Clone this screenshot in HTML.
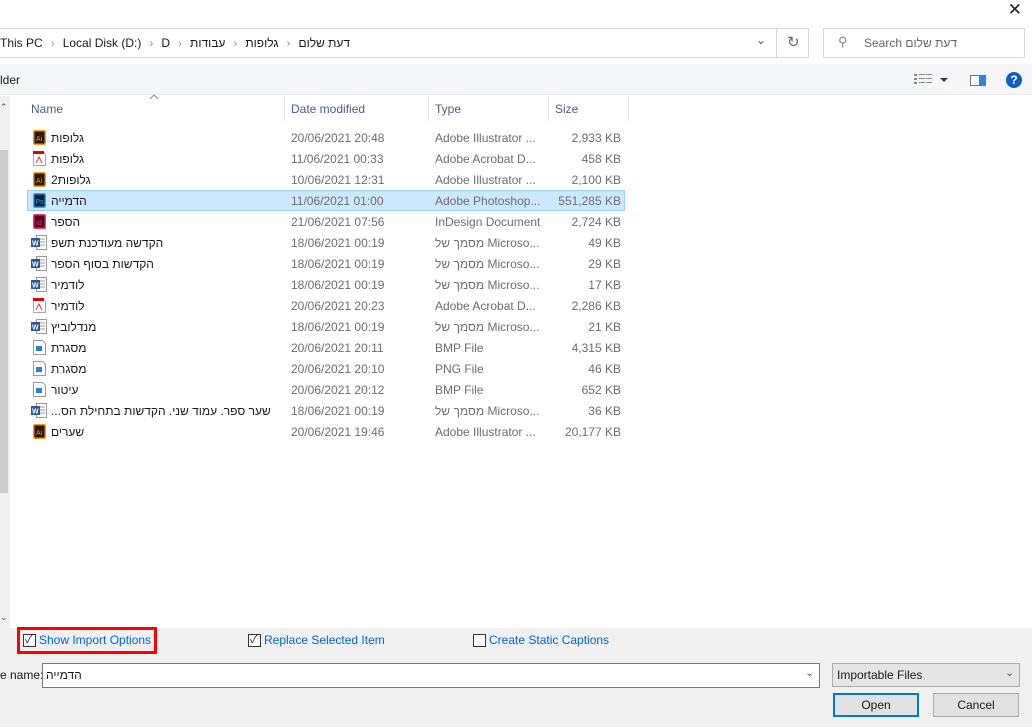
<!DOCTYPE html>
<html><head><meta charset="utf-8"><style>
*{box-sizing:border-box;margin:0;padding:0}
body{width:1032px;height:727px;overflow:hidden;background:#fff;font-family:"Liberation Sans","Noto Sans CJK SC",sans-serif;font-size:12px;color:#1a1a1a;position:relative}
.a{position:absolute}
.row{position:absolute;left:27px;width:598px;height:21px}
.row span{position:absolute;top:4px;white-space:nowrap}
.n{left:24px;color:#1a1a1a}
.d{left:264px;color:#6d6d6d}
.t{left:408px;color:#6d6d6d}
.s{right:4px;color:#6d6d6d}
.ic{position:absolute;left:6px;top:3px;width:13px;height:15px}
.cb{position:absolute;width:13px;height:13px;border:1px solid #333;background:#fff}
.lnk{position:absolute;color:#0066cc;font-size:12px}
.bc span{display:inline-block;unicode-bidi:isolate}
.sep{color:#999;margin:0 8px}
</style></head><body>
<div class="a" style="right:10px;top:0;font-size:17px;color:#222">✕</div>
<div class="a" style="left:-1px;top:28px;width:810px;height:30px;border:1px solid #d9d9d9"></div>
<div class="a" style="left:776px;top:28px;width:1px;height:30px;background:#d9d9d9"></div>
<div class="a bc" style="left:0;top:36px;font-size:12px;color:#1a1a1a;white-space:nowrap"><span>This PC</span><span class="sep">›</span><span>Local Disk (D:)</span><span class="sep">›</span><span>D</span><span class="sep">›</span><span>עבודות</span><span class="sep">›</span><span>גלופות</span><span class="sep">›</span><span>דעת שלום</span></div>
<div class="a" style="left:756px;top:33px;color:#555;font-size:12px">⌄</div>
<div class="a" style="left:787px;top:33px;color:#666;font-size:15px">↻</div>
<div class="a" style="left:823px;top:28px;width:202px;height:30px;border:1px solid #d9d9d9"></div>
<div class="a" style="left:838px;top:34px;color:#888;font-size:13px">⚲</div>
<div class="a" style="left:864px;top:36px;color:#666">Search דעת שלום</div>
<div class="a" style="left:0;top:64px;width:1032px;height:31px;background:#f5f6f7;border-bottom:1px dotted #e3e3e3"></div>
<div class="a" style="left:0;top:73px;color:#1a1a1a">lder</div>
<svg class="a" style="left:914px;top:74px" width="40" height="12"><g fill="#888"><rect x="0" y="0" width="3" height="2"/><rect x="0" y="4" width="3" height="2"/><rect x="0" y="8" width="3" height="2"/><rect x="5" y="0" width="6" height="1"/><rect x="5" y="4" width="6" height="1"/><rect x="5" y="8" width="6" height="1"/><rect x="12" y="0" width="6" height="1"/><rect x="12" y="4" width="6" height="1"/><rect x="12" y="8" width="6" height="1"/></g><path d="M26 4h8l-4 4z" fill="#1e3a6e"/></svg>
<div class="a" style="left:970px;top:75px;width:16px;height:11px;border:1px solid #777;background:#fff"><div style="position:absolute;right:0;top:0;width:6px;height:9px;background:#2f84d8"></div></div>
<div class="a" style="left:1006px;top:72px;width:16px;height:16px;border-radius:50%;background:#0b5fbf;color:#fff;font-weight:bold;font-size:12px;text-align:center;line-height:16px">?</div>
<div class="a" style="left:0;top:96px;width:10px;height:532px;background:#f0f0f0"></div>
<div class="a" style="left:0;top:150px;width:8px;height:343px;background:#cdcdcd"></div>
<div class="a" style="left:0;top:102px;font-size:9px;color:#555">⌃</div>
<div class="a" style="left:0;top:612px;font-size:9px;color:#555">⌄</div>
<div class="a" style="left:31px;top:102px;color:#4c607a">Name</div>
<svg class="a" style="left:149px;top:94px" width="10" height="6"><path d="M1 5l4-4 4 4" stroke="#888" fill="none"/></svg>
<div class="a" style="left:284px;top:96px;width:1px;height:25px;background:#e5e5e5"></div>
<div class="a" style="left:291px;top:102px;color:#4c607a">Date modified</div>
<div class="a" style="left:428px;top:96px;width:1px;height:25px;background:#e5e5e5"></div>
<div class="a" style="left:435px;top:102px;color:#4c607a">Type</div>
<div class="a" style="left:548px;top:96px;width:1px;height:25px;background:#e5e5e5"></div>
<div class="a" style="left:555px;top:102px;color:#4c607a">Size</div>
<div class="a" style="left:628px;top:96px;width:1px;height:25px;background:#e5e5e5"></div>
<div class="row" style="top:127px"><svg class="ic"><rect width="13" height="15" rx="2" fill="#f29b1d"/><rect x="1.5" y="1.5" width="10" height="12" fill="#2b1400"/><text x="3" y="11" font-size="7" fill="#f29b1d" font-family="Liberation Sans">Ai</text></svg><span class="n">גלופות</span><span class="d">20/06/2021 20:48</span><span class="t">Adobe Illustrator ...</span><span class="s">2,933 KB</span></div>
<div class="row" style="top:148px"><svg class="ic"><path d="M0.5 0.5h9l3 3v11h-12z" fill="#fff" stroke="#aaa"/><rect width="11" height="3" fill="#d00"/><path d="M3 12l3-6 3 6" stroke="#e33" fill="none"/></svg><span class="n">גלופות</span><span class="d">11/06/2021 00:33</span><span class="t">Adobe Acrobat D...</span><span class="s">458 KB</span></div>
<div class="row" style="top:169px"><svg class="ic"><rect width="13" height="15" rx="2" fill="#f29b1d"/><rect x="1.5" y="1.5" width="10" height="12" fill="#2b1400"/><text x="3" y="11" font-size="7" fill="#f29b1d" font-family="Liberation Sans">Ai</text></svg><span class="n">גלופות2</span><span class="d">10/06/2021 12:31</span><span class="t">Adobe Illustrator ...</span><span class="s">2,100 KB</span></div>
<div class="row" style="top:190px;background:#cce8ff;border:1px solid #99d1ff"><svg class="ic" style="left:5px;top:2px"><rect width="13" height="15" rx="2" fill="#31a8ff"/><rect x="1.5" y="1.5" width="10" height="12" fill="#001e36"/><text x="2.5" y="11" font-size="7" fill="#31a8ff" font-family="Liberation Sans">Ps</text></svg><span class="n" style="left:23px;top:3px">הדמייה</span><span class="d" style="left:263px;top:3px">11/06/2021 01:00</span><span class="t" style="left:407px;top:3px">Adobe Photoshop...</span><span class="s" style="right:3px;top:3px">551,285 KB</span></div>
<div class="row" style="top:211px"><svg class="ic"><rect width="13" height="15" rx="2" fill="#ff3366"/><rect x="1.5" y="1.5" width="10" height="12" fill="#49021f"/><text x="3" y="11" font-size="7" fill="#ff3366" font-family="Liberation Sans">Id</text></svg><span class="n">הספר</span><span class="d">21/06/2021 07:56</span><span class="t">InDesign Document</span><span class="s">2,724 KB</span></div>
<div class="row" style="top:232px"><svg class="ic" style="left:4px;width:16px"><path d="M5.5 0.5h10v14h-10z" fill="#fff" stroke="#999"/><path d="M8 4h6M8 7h6M8 10h6" stroke="#999"/><rect x="0" y="3" width="9" height="9" fill="#2b579a"/><text x="1" y="10.5" font-size="7" fill="#fff" font-weight="bold" font-family="Liberation Sans">W</text></svg><span class="n">הקדשה מעודכנת תשפ</span><span class="d">18/06/2021 00:19</span><span class="t">מסמך של Microso...</span><span class="s">49 KB</span></div>
<div class="row" style="top:253px"><svg class="ic" style="left:4px;width:16px"><path d="M5.5 0.5h10v14h-10z" fill="#fff" stroke="#999"/><path d="M8 4h6M8 7h6M8 10h6" stroke="#999"/><rect x="0" y="3" width="9" height="9" fill="#2b579a"/><text x="1" y="10.5" font-size="7" fill="#fff" font-weight="bold" font-family="Liberation Sans">W</text></svg><span class="n">הקדשות בסוף הספר</span><span class="d">18/06/2021 00:19</span><span class="t">מסמך של Microso...</span><span class="s">29 KB</span></div>
<div class="row" style="top:274px"><svg class="ic" style="left:4px;width:16px"><path d="M5.5 0.5h10v14h-10z" fill="#fff" stroke="#999"/><path d="M8 4h6M8 7h6M8 10h6" stroke="#999"/><rect x="0" y="3" width="9" height="9" fill="#2b579a"/><text x="1" y="10.5" font-size="7" fill="#fff" font-weight="bold" font-family="Liberation Sans">W</text></svg><span class="n">לודמיר</span><span class="d">18/06/2021 00:19</span><span class="t">מסמך של Microso...</span><span class="s">17 KB</span></div>
<div class="row" style="top:295px"><svg class="ic"><path d="M0.5 0.5h9l3 3v11h-12z" fill="#fff" stroke="#aaa"/><rect width="11" height="3" fill="#d00"/><path d="M3 12l3-6 3 6" stroke="#e33" fill="none"/></svg><span class="n">לודמיר</span><span class="d">20/06/2021 20:23</span><span class="t">Adobe Acrobat D...</span><span class="s">2,286 KB</span></div>
<div class="row" style="top:316px"><svg class="ic" style="left:4px;width:16px"><path d="M5.5 0.5h10v14h-10z" fill="#fff" stroke="#999"/><path d="M8 4h6M8 7h6M8 10h6" stroke="#999"/><rect x="0" y="3" width="9" height="9" fill="#2b579a"/><text x="1" y="10.5" font-size="7" fill="#fff" font-weight="bold" font-family="Liberation Sans">W</text></svg><span class="n">מנדלוביץ</span><span class="d">18/06/2021 00:19</span><span class="t">מסמך של Microso...</span><span class="s">21 KB</span></div>
<div class="row" style="top:337px"><svg class="ic"><path d="M0.5 0.5h9l3 3v11h-12z" fill="#fff" stroke="#999"/><rect x="3" y="6" width="6" height="5" fill="#2f7fd0"/></svg><span class="n">מסגרת</span><span class="d">20/06/2021 20:11</span><span class="t">BMP File</span><span class="s">4,315 KB</span></div>
<div class="row" style="top:358px"><svg class="ic"><path d="M0.5 0.5h9l3 3v11h-12z" fill="#fff" stroke="#999"/><rect x="3" y="6" width="6" height="5" fill="#2f7fd0"/></svg><span class="n">מסגרת</span><span class="d">20/06/2021 20:10</span><span class="t">PNG File</span><span class="s">46 KB</span></div>
<div class="row" style="top:379px"><svg class="ic"><path d="M0.5 0.5h9l3 3v11h-12z" fill="#fff" stroke="#999"/><rect x="3" y="6" width="6" height="5" fill="#2f7fd0"/></svg><span class="n">עיטור</span><span class="d">20/06/2021 20:12</span><span class="t">BMP File</span><span class="s">652 KB</span></div>
<div class="row" style="top:400px"><svg class="ic" style="left:4px;width:16px"><path d="M5.5 0.5h10v14h-10z" fill="#fff" stroke="#999"/><path d="M8 4h6M8 7h6M8 10h6" stroke="#999"/><rect x="0" y="3" width="9" height="9" fill="#2b579a"/><text x="1" y="10.5" font-size="7" fill="#fff" font-weight="bold" font-family="Liberation Sans">W</text></svg><span class="n">...שער ספר. עמוד שני. הקדשות בתחילת הס</span><span class="d">18/06/2021 00:19</span><span class="t">מסמך של Microso...</span><span class="s">36 KB</span></div>
<div class="row" style="top:421px"><svg class="ic"><rect width="13" height="15" rx="2" fill="#f29b1d"/><rect x="1.5" y="1.5" width="10" height="12" fill="#2b1400"/><text x="3" y="11" font-size="7" fill="#f29b1d" font-family="Liberation Sans">Ai</text></svg><span class="n">שערים</span><span class="d">20/06/2021 19:46</span><span class="t">Adobe Illustrator ...</span><span class="s">20,177 KB</span></div>
<div class="a" style="left:0;top:628px;width:1032px;height:99px;background:#f0f0f0"></div>
<div class="a" style="left:17px;top:627px;width:140px;height:27px;border:3px solid #f00"></div>
<div class="cb" style="left:23px;top:634px"></div><div class="a" style="left:25px;top:631px;font-size:11px">✓</div>
<div class="lnk" style="left:39px;top:633px">Show Import Options</div>
<div class="cb" style="left:248px;top:634px"></div><div class="a" style="left:250px;top:631px;font-size:11px">✓</div>
<div class="lnk" style="left:264px;top:633px">Replace Selected Item</div>
<div class="cb" style="left:473px;top:634px"></div>
<div class="lnk" style="left:489px;top:633px">Create Static Captions</div>
<div class="a" style="left:0;top:668px">e name:</div>
<div class="a" style="left:42px;top:663px;width:778px;height:25px;border:1px solid #7a7a7a;background:#fff"></div>
<div class="a" style="left:46px;top:668px">הדמייה</div>
<div class="a" style="left:805px;top:666px;color:#555;font-size:11px">⌄</div>
<div class="a" style="left:832px;top:663px;width:188px;height:24px;border:1px solid #adadad;background:#e5e5e5"></div>
<div class="a" style="left:837px;top:668px">Importable Files</div>
<div class="a" style="left:1005px;top:666px;color:#555;font-size:11px">⌄</div>
<div class="a" style="left:833px;top:693px;width:86px;height:24px;border:2px solid #0078d7;background:#e1e1e1;text-align:center;line-height:20px">Open</div>
<div class="a" style="left:933px;top:693px;width:86px;height:24px;border:1px solid #adadad;background:#e1e1e1;text-align:center;line-height:22px">Cancel</div>
</body></html>
